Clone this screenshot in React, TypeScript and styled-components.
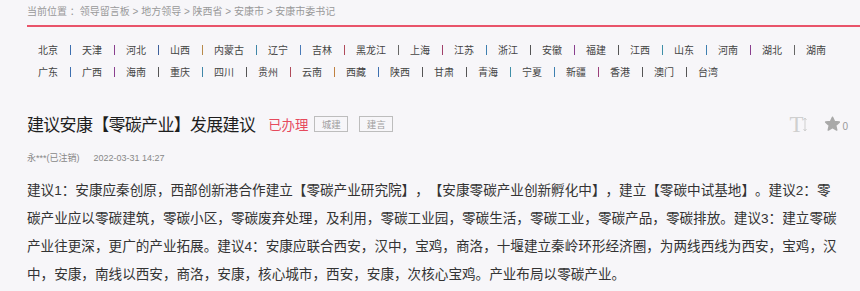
import React from "react";
import styled, { createGlobalStyle } from "styled-components";

const GlobalStyle = createGlobalStyle`
  html, body {
    margin: 0;
    padding: 0;
    background: #f7f6f9;
    overflow: hidden;
  }
  body {
    font-family: "Liberation Sans", "Noto Sans CJK SC", sans-serif;
    color: #333;
    text-spacing-trim: space-all;
  }
`;

const Page = styled.div`
  padding-left: 27px;
  width: 833px;
`;

const Breadcrumb = styled.div`
  height: 25px;
  line-height: 24px;
  font-size: 10px;
  color: #999;
  border-bottom: 2px solid #e9546a;
  white-space: nowrap;
`;

const Nav = styled.div`
  margin-top: 12px;
  padding-left: 11px;
`;

const NavRow = styled.div`
  display: flex;
  align-items: center;
  height: 22px;
  font-size: 10px;
  color: #444;
  white-space: nowrap;
`;

const NavItem = styled.span`
  font-family: "Noto Sans CJK SC", sans-serif;
  line-height: 22px;
`;

const Sep = styled.span<{ $c: string }>`
  display: inline-block;
  width: 1px;
  height: 10px;
  margin: 0 11px 0 12px;
  background: ${(p) => p.$c};
`;

const TitleRow = styled.div`
  display: flex;
  align-items: center;
  height: 30px;
  margin-top: 26px;
`;

const Title = styled.h1`
  margin: 0;
  font-family: "Noto Sans CJK SC", sans-serif;
  font-size: 17px;
  letter-spacing: -0.7px;
  font-weight: 400;
  color: #1e1e1e;
  line-height: 30px;
`;

const Status = styled.span`
  margin-left: 13px;
  font-family: "Noto Sans CJK SC", sans-serif;
  font-size: 13.4px;
  color: #e64a5d;
`;

const Tag = styled.span<{ $first?: boolean }>`
  display: inline-flex;
  align-items: center;
  justify-content: center;
  box-sizing: border-box;
  width: 34px;
  height: 16px;
  margin-left: ${(p) => (p.$first ? "6px" : "11px")};
  border: 1px solid #bdbdbd;
  font-family: "Noto Sans CJK SC", sans-serif;
  font-size: 9.5px;
  color: #a0a0a0;
`;

const Tools = styled.div`
  margin-left: auto;
  margin-right: 12px;
  display: flex;
  align-items: center;
`;

const FontTool = styled.span`
  display: inline-flex;
  align-items: center;
  font-family: "Liberation Serif", serif;
  font-size: 23px;
  line-height: 1;
  color: #cfcfcf;
`;

const Star = styled.span`
  display: inline-flex;
  align-items: flex-end;
  margin-left: 17px;
`;

const Count = styled.span`
  font-size: 10px;
  color: #999;
  margin-left: 1px;
`;

const Meta = styled.div`
  margin-top: 11px;
  height: 16px;
  line-height: 16px;
  font-size: 9px;
  color: #888;
  display: flex;
`;

const MetaDate = styled.span`
  margin-left: 14px;
  font-size: 9px;
`;

const Body = styled.p`
  margin: 11px 0 0;
  width: 815px;
  font-size: 13.6px;
  line-height: 28px;
  color: #333;
  text-spacing-trim: space-all;
`;

const row1 = ["北京", "天津", "河北", "山西", "内蒙古", "辽宁", "吉林", "黑龙江", "上海", "江苏", "浙江", "安徽", "福建", "江西", "山东", "河南", "湖北", "湖南"];
const row2 = ["广东", "广西", "海南", "重庆", "四川", "贵州", "云南", "西藏", "陕西", "甘肃", "青海", "宁夏", "新疆", "香港", "澳门", "台湾"];

const c1 = ["#3d6fb0", "#8a3f8f", "#3d5f9a", "#b88a4a", "#3f86a8", "#4a7ab8", "#b04a5a", "#666", "#a0406a", "#3d7fb0", "#555", "#8a3f8f", "#555", "#3f8fa8", "#3d7fb0", "#8a3f8f", "#666"];
const c2 = ["#3d6fb0", "#8a3f8f", "#555", "#3f86a8", "#555", "#b04a5a", "#c08040", "#3d6fb0", "#555", "#555", "#3f8fa8", "#3d7fb0", "#9a3f7a", "#555", "#555"];

const Row = ({ items, colors }: { items: string[]; colors: string[] }) => (
  <NavRow>
    {items.map((t, i) => (
      <React.Fragment key={t}>
        <NavItem>{t}</NavItem>
        {i < items.length - 1 && <Sep $c={colors[i % colors.length]} />}
      </React.Fragment>
    ))}
  </NavRow>
);

export default function App() {
  return (
    <>
      <GlobalStyle />
      <Page>
        <Breadcrumb>当前位置 ：领导留言板 &gt; 地方领导 &gt; 陕西省 &gt; 安康市 &gt; 安康市委书记</Breadcrumb>
        <Nav>
          <Row items={row1} colors={c1} />
          <Row items={row2} colors={c2} />
        </Nav>
        <TitleRow>
          <Title>建议安康【零碳产业】发展建议</Title>
          <Status>已办理</Status>
          <Tag $first>城建</Tag>
          <Tag>建言</Tag>
          <Tools>
            <FontTool>
              T
              <svg width="4" height="15" viewBox="0 0 4 15">
                <path d="M2 1 V14 M0.5 3 L2 1 L3.5 3 M0.5 12 L2 14 L3.5 12" stroke="#cfcfcf" strokeWidth="1" fill="none" />
              </svg>
            </FontTool>
            <Star>
              <svg width="17" height="16" viewBox="0 0 24 23">
                <path
                  d="M12 1.8 L14.9 8.1 L21.8 8.8 L16.6 13.4 L18.1 20.2 L12 16.7 L5.9 20.2 L7.4 13.4 L2.2 8.8 L9.1 8.1 Z"
                  fill="#a9a9a9"
                  stroke="#a9a9a9"
                  strokeWidth="2.2"
                  strokeLinejoin="round"
                />
              </svg>
              <Count>0</Count>
            </Star>
          </Tools>
        </TitleRow>
        <Meta>
          <span>永***(已注销)</span>
          <MetaDate>2022-03-31 14:27</MetaDate>
        </Meta>
        <Body>
          建议1：安康应秦创原，西部创新港合作建立【零碳产业研究院】，【安康零碳产业创新孵化中】，建立【零碳中试基地】。建议2：零碳产业应以零碳建筑，零碳小区，零碳废弃处理，及利用，零碳工业园，零碳生活，零碳工业，零碳产品，零碳排放。建议3：建立零碳产业往更深，更广的产业拓展。建议4：安康应联合西安，汉中，宝鸡，商洛，十堰建立秦岭环形经济圈，为两线西线为西安，宝鸡，汉中，安康，南线以西安，商洛，安康，核心城市，西安，安康，次核心宝鸡。产业布局以零碳产业。
        </Body>
      </Page>
    </>
  );
}
